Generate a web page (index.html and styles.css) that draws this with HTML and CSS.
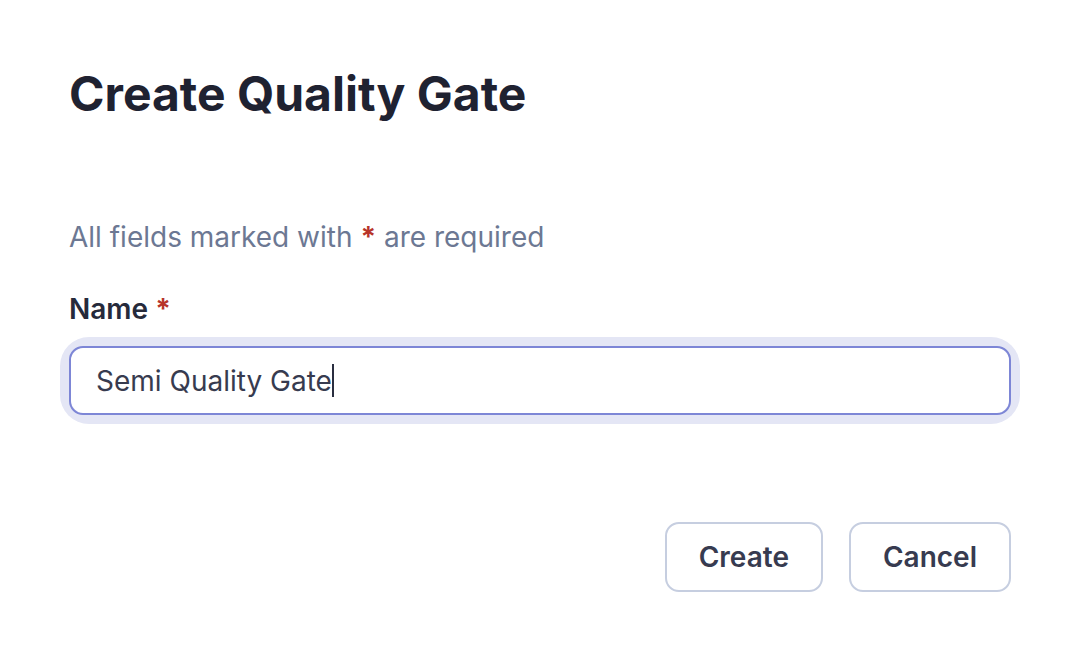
FILE: index.html
```html
<!DOCTYPE html>
<html>
<head>
<meta charset="utf-8">
<link rel="stylesheet" href="styles.css">
</head>
<body>
<div class="modal">
  <h1 class="title">Create Quality Gate</h1>
  <p class="hint">All fields marked with <span class="req">*</span> are required</p>
  <label class="label">Name <span class="req">*</span></label>
  <div class="field">
    <div class="input"><span class="value">Semi Quality Gate</span><span class="caret"></span></div>
  </div>
  <div class="actions">
    <button class="btn">Create</button>
    <button class="btn">Cancel</button>
  </div>
</div>
</body>
</html>
```
FILE: styles.css
```css
html, body {
  margin: 0;
  background: #ffffff;
}
body {
  font-family: Inter, "Noto Sans", sans-serif;
  width: 1082px;
  height: 660px;
  overflow: hidden;
}
.modal {
  padding: 64px 71px 0 69px;
  display: flex;
  flex-direction: column;
}
.title {
  margin: 0;
  font-size: 48px;
  line-height: 60px;
  font-weight: 700;
  color: #1f2231;
}
.hint {
  margin: 95px 0 0 0;
  font-size: 28px;
  line-height: 36px;
  color: #6c7893;
}
.req {
  color: #b7342a;
  font-weight: 700;
}
.label {
  margin-top: 36px;
  font-size: 28px;
  line-height: 36px;
  font-weight: 600;
  color: #262a3b;
}
.field {
  margin-top: 19px;
  border-radius: 20px;
  box-shadow: 0 0 0 9px #e4e6f5;
}
.input {
  height: 65px;
  border: 2px solid #7d86d6;
  border-radius: 14px;
  display: flex;
  align-items: center;
  padding-left: 25px;
  font-size: 28px;
  color: #373b4f;
}
.caret {
  display: inline-block;
  width: 2px;
  height: 33px;
  background: #2a2e40;
  margin-left: 0;
}
.actions {
  margin-top: 107px;
  display: flex;
  justify-content: flex-end;
  gap: 26px;
}
.btn {
  font-family: inherit;
  background: #ffffff;
  border: 2px solid #c6cee0;
  border-radius: 14px;
  height: 70px;
  padding: 0 32px;
  font-size: 28px;
  font-weight: 600;
  color: #373b50;
}
```
